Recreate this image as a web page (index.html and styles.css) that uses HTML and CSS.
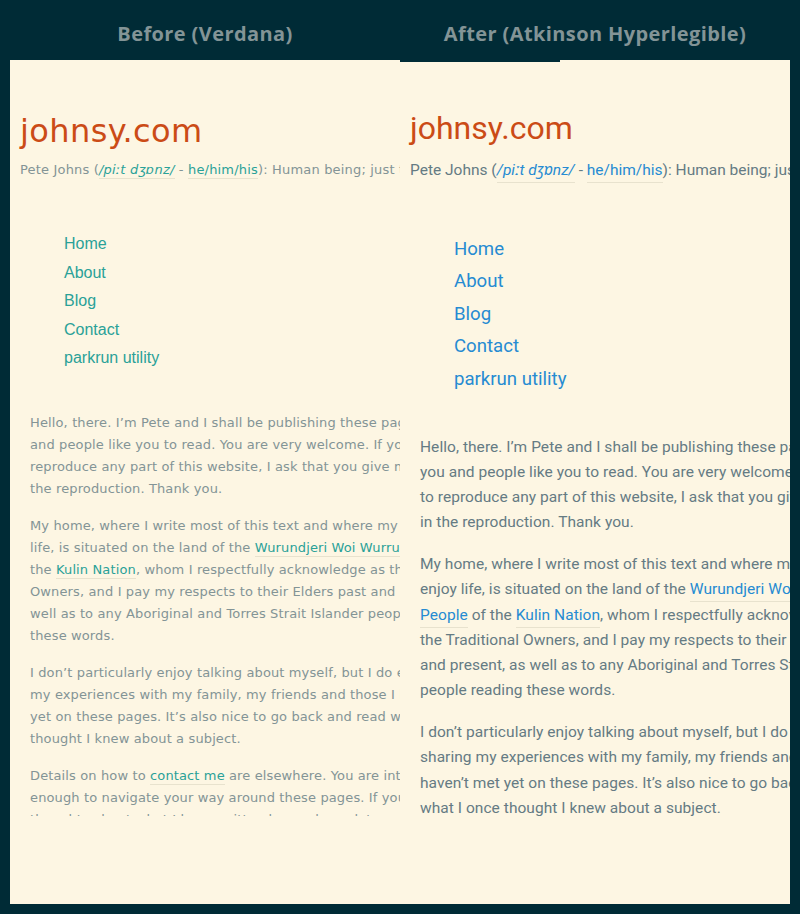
FILE: index.html
```html
<!DOCTYPE html>
<html lang="en">
<head>
<meta charset="utf-8">
<title>johnsy.com — font comparison</title>
<link rel="stylesheet" href="styles.css">
</head>
<body>
<div class="compare">
  <div class="labels">
    <h2 class="label">Before (Verdana)</h2>
    <h2 class="label">After (Atkinson Hyperlegible)</h2>
  </div>
  <div class="panels">
    <section class="panel panel-before">
      <div class="viewport">
        <header class="site-header">
          <h1 class="site-title">johnsy.com</h1>
          <p class="tagline">Pete Johns (<a class="ipa" href="#">/piːt dʒɒnz/</a> - <a href="#">he/him/his</a>): Human being; just trying to make sense of it all.</p>
        </header>
        <nav class="site-nav">
          <ul>
            <li><a href="#">Home</a></li>
            <li><a href="#">About</a></li>
            <li><a href="#">Blog</a></li>
            <li><a href="#">Contact</a></li>
            <li><a href="#">parkrun utility</a></li>
          </ul>
        </nav>
        <main class="content">
          <p>Hello, there. I’m Pete and I shall be publishing these pages for you<br>and people like you to read. You are very welcome. If you wish to<br>reproduce any part of this website, I ask that you give me credit in<br>the reproduction. Thank you.</p>
          <p>My home, where I write most of this text and where my family and I enjoy<br>life, is situated on the land of the <a href="#">Wurundjeri Woi Wurrung People</a> of<br>the <a href="#">Kulin Nation</a>, whom I respectfully acknowledge as the Traditional<br>Owners, and I pay my respects to their Elders past and present, as<br>well as to any Aboriginal and Torres Strait Islander people reading<br>these words.</p>
          <p>I don’t particularly enjoy talking about myself, but I do enjoy sharing<br>my experiences with my family, my friends and those I haven’t met<br>yet on these pages. It’s also nice to go back and read what I once<br>thought I knew about a subject.</p>
          <p>Details on how to <a href="#">contact me</a> are elsewhere. You are intelligent<br>enough to navigate your way around these pages. If you have<br>thoughts about what I have written here, please let me know.</p>
        </main>
      </div>
    </section>
    <section class="panel panel-after">
      <div class="viewport">
        <header class="site-header">
          <h1 class="site-title">johnsy.com</h1>
          <p class="tagline">Pete Johns (<a class="ipa" href="#">/piːt dʒɒnz/</a> - <a href="#">he/him/his</a>): Human being; just trying to make sense of it all.</p>
        </header>
        <nav class="site-nav">
          <ul>
            <li><a href="#">Home</a></li>
            <li><a href="#">About</a></li>
            <li><a href="#">Blog</a></li>
            <li><a href="#">Contact</a></li>
            <li><a href="#">parkrun utility</a></li>
          </ul>
        </nav>
        <main class="content">
          <p>Hello, there. I’m Pete and I shall be publishing these pages for<br>you and people like you to read. You are very welcome. If you wish<br>to reproduce any part of this website, I ask that you give me credit<br>in the reproduction. Thank you.</p>
          <p>My home, where I write most of this text and where my family and I<br>enjoy life, is situated on the land of the <a href="#">Wurundjeri Woi Wurrung<br>People</a> of the <a href="#">Kulin Nation</a>, whom I respectfully acknowledge as<br>the Traditional Owners, and I pay my respects to their Elders past<br>and present, as well as to any Aboriginal and Torres Strait Islander<br>people reading these words.</p>
          <p>I don’t particularly enjoy talking about myself, but I do enjoy<br>sharing my experiences with my family, my friends and those I<br>haven’t met yet on these pages. It’s also nice to go back and read<br>what I once thought I knew about a subject.</p>
          <p>Details on how to <a href="#">contact me</a> are elsewhere. You are<br>intelligent enough to navigate your way around these pages.</p>
        </main>
      </div>
    </section>
  </div>
</div>
</body>
</html>
```
FILE: styles.css
```css
html, body {
  margin: 0;
  padding: 0;
}

body {
  background: #002b36;
}

.compare {
  padding: 0 10px 10px;
}

.labels {
  display: grid;
  grid-template-columns: 390px 390px;
  height: 60px;
  box-sizing: border-box;
  padding-top: 24px;
  align-items: start;
}

.label {
  margin: 0;
  text-align: center;
  font-family: "Open Sans", "Noto Sans", sans-serif;
  font-weight: 700;
  font-size: 20px;
  line-height: 20px;
  letter-spacing: 0.4px;
  color: #839496;
}

.panels {
  display: grid;
  grid-template-columns: 390px 390px;
}

.panel {
  position: relative;
  height: 844px;
  overflow: hidden;
  background: #fdf6e3;
}

.panel-after::before {
  content: "";
  position: absolute;
  top: 0;
  left: 0;
  width: 160px;
  height: 2px;
  background: #002b36;
}

.viewport {
  height: 756px;
  overflow: hidden;
  padding: 0 10px;
}

.site-title {
  margin: 0;
  font-weight: 400;
  font-size: 32px;
  line-height: 40px;
  color: #cb4b16;
  white-space: nowrap;
}

.tagline {
  margin: 0;
  white-space: nowrap;
}

.tagline a,
.content a {
  text-decoration: none;
  border-bottom: 1px solid #e8e2ce;
}

.ipa {
  font-style: italic;
}

.site-nav ul {
  list-style: none;
  margin: 0;
  padding: 0 0 0 44px;
}

.site-nav a {
  text-decoration: none;
}

.content {
  display: block;
  padding-left: 10px;
}

.content p {
  margin: 0;
  white-space: nowrap;
}

/* Before: Verdana-like */
.panel-before {
  font-family: "DejaVu Sans", Verdana, sans-serif;
  color: #839496;
}

.panel-before a {
  color: #2aa198;
}

.panel-before .site-title {
  margin-top: 51px;
  letter-spacing: 0.4px;
}

.panel-before .tagline {
  margin-top: 9px;
  font-size: 13px;
  line-height: 20px;
  letter-spacing: 0.18px;
}

.panel-before .tagline a,
.panel-before .content a {
  padding-bottom: 1px;
}

.panel-before .site-nav ul {
  margin-top: 50px;
  font-family: "Liberation Sans", Arial, sans-serif;
  font-size: 16px;
  line-height: 28.5px;
}

.panel-before .content {
  margin-top: 39px;
  font-size: 13px;
  line-height: 22px;
  letter-spacing: 0.13px;
}

.panel-before .content p {
  margin-bottom: 15.3px;
}

/* After: Atkinson Hyperlegible-like */
.panel-after {
  font-family: Roboto, "Noto Sans", sans-serif;
  color: #657b83;
}

.panel-after a {
  color: #268bd2;
}

.panel-after .site-title {
  margin-top: 48px;
}

.panel-after .tagline {
  margin-top: 11px;
  font-size: 15.5px;
  line-height: 22px;
}

.panel-after .tagline a,
.panel-after .content a {
  padding-bottom: 3px;
}

.panel-after .site-nav ul {
  margin-top: 51.5px;
  font-size: 18.6px;
  line-height: 32.5px;
}

.panel-after .content {
  margin-top: 39.5px;
  font-size: 15.5px;
  line-height: 25.3px;
  letter-spacing: 0.05px;
}

.panel-after .content p {
  margin-bottom: 16.3px;
}
```
